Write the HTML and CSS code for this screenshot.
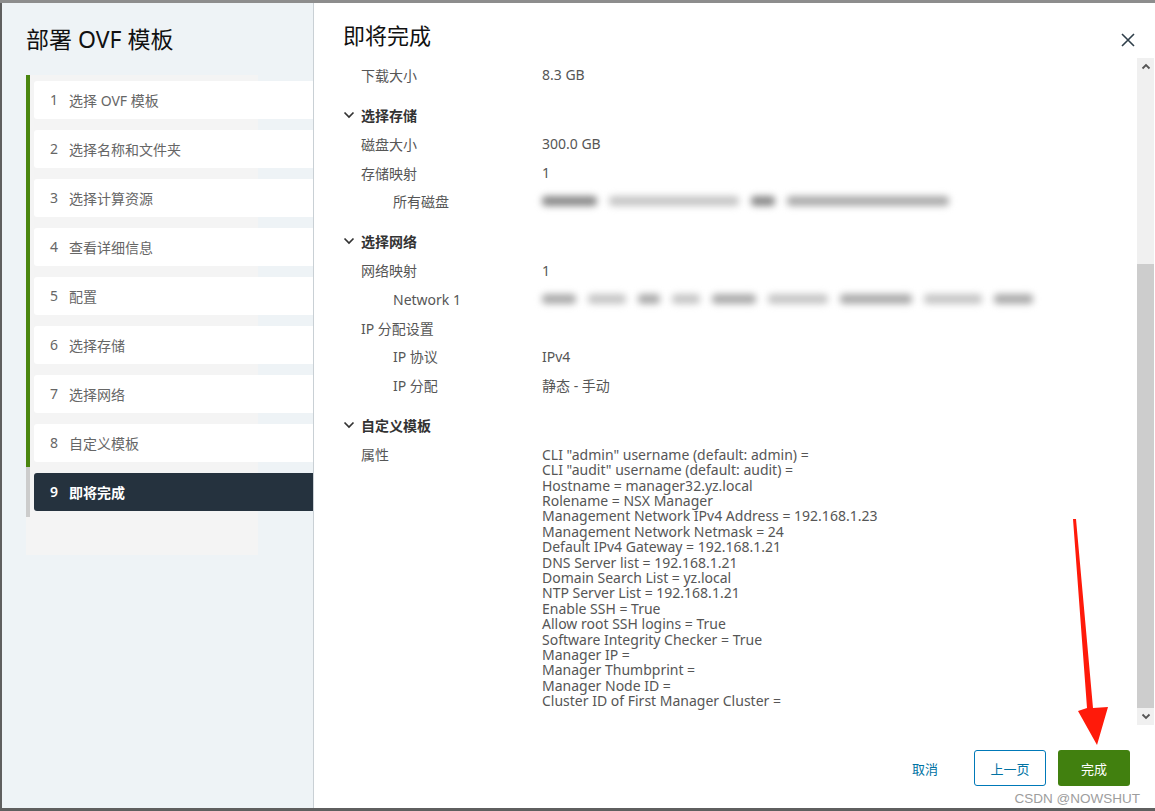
FILE: index.html
```html
<!DOCTYPE html>
<html lang="zh-CN">
<head>
<meta charset="utf-8">
<title>部署 OVF 模板</title>
<link rel="stylesheet" href="styles.css">
</head>
<body>
<div class="topstrip"></div>
<div class="dialog">
  <aside class="side">
    <h1 class="side-title">部署 OVF 模板</h1>
    <nav class="steps-wrap">
      <ol class="steps">
        <li class="step done"><div class="step-box"><span class="num">1</span>选择 OVF 模板</div></li>
        <li class="step done"><div class="step-box"><span class="num">2</span>选择名称和文件夹</div></li>
        <li class="step done"><div class="step-box"><span class="num">3</span>选择计算资源</div></li>
        <li class="step done"><div class="step-box"><span class="num">4</span>查看详细信息</div></li>
        <li class="step done"><div class="step-box"><span class="num">5</span>配置</div></li>
        <li class="step done"><div class="step-box"><span class="num">6</span>选择存储</div></li>
        <li class="step done"><div class="step-box"><span class="num">7</span>选择网络</div></li>
        <li class="step done"><div class="step-box"><span class="num">8</span>自定义模板</div></li>
        <li class="step current"><div class="step-box"><span class="num">9</span>即将完成</div></li>
      </ol>
    </nav>
  </aside>
  <main class="main">
    <header class="main-head">
      <h2 class="main-title">即将完成</h2>
      <button class="close" aria-label="关闭">
        <svg width="14" height="14" viewBox="0 0 14 14"><path d="M1 1 L13 13 M13 1 L1 13" stroke="#2f3f4a" stroke-width="1.6" fill="none"/></svg>
      </button>
    </header>
    <div class="scroll-area">
      <div class="content">
        <div class="row"><span class="lbl">下载大小</span><span class="val">8.3 GB</span></div>

        <div class="row sec"><svg class="chev" width="12" height="8" viewBox="0 0 12 8"><path d="M1.5 1.5 L6 6 L10.5 1.5" stroke="#333" stroke-width="1.7" fill="none"/></svg><span class="sec-title">选择存储</span></div>
        <div class="row"><span class="lbl">磁盘大小</span><span class="val">300.0 GB</span></div>
        <div class="row"><span class="lbl">存储映射</span><span class="val">1</span></div>
        <div class="row"><span class="lbl sub">所有磁盘</span><span class="val blurred">
          <i class="bl d" style="width:55px"></i><i class="bl l" style="width:130px"></i><i class="bl d" style="width:24px"></i><i class="bl m" style="width:162px"></i>
        </span></div>

        <div class="row sec"><svg class="chev" width="12" height="8" viewBox="0 0 12 8"><path d="M1.5 1.5 L6 6 L10.5 1.5" stroke="#333" stroke-width="1.7" fill="none"/></svg><span class="sec-title">选择网络</span></div>
        <div class="row"><span class="lbl">网络映射</span><span class="val">1</span></div>
        <div class="row"><span class="lbl sub lat">Network 1</span><span class="val blurred">
          <i class="bl m" style="width:34px"></i><i class="bl l" style="width:38px"></i><i class="bl m" style="width:22px"></i><i class="bl l" style="width:28px"></i><i class="bl m" style="width:44px"></i><i class="bl l" style="width:60px"></i><i class="bl m" style="width:72px"></i><i class="bl l" style="width:58px"></i><i class="bl m" style="width:39px"></i>
        </span></div>
        <div class="row"><span class="lbl">IP 分配设置</span><span class="val"></span></div>
        <div class="row"><span class="lbl sub">IP 协议</span><span class="val">IPv4</span></div>
        <div class="row"><span class="lbl sub">IP 分配</span><span class="val">静态 - 手动</span></div>

        <div class="row sec"><svg class="chev" width="12" height="8" viewBox="0 0 12 8"><path d="M1.5 1.5 L6 6 L10.5 1.5" stroke="#333" stroke-width="1.7" fill="none"/></svg><span class="sec-title">自定义模板</span></div>
        <div class="row props"><span class="lbl">属性</span><div class="val plist">
          <div>CLI "admin" username (default: admin) =</div>
          <div>CLI "audit" username (default: audit) =</div>
          <div>Hostname = manager32.yz.local</div>
          <div>Rolename = NSX Manager</div>
          <div>Management Network IPv4 Address = 192.168.1.23</div>
          <div>Management Network Netmask = 24</div>
          <div>Default IPv4 Gateway = 192.168.1.21</div>
          <div>DNS Server list = 192.168.1.21</div>
          <div>Domain Search List = yz.local</div>
          <div>NTP Server List = 192.168.1.21</div>
          <div>Enable SSH = True</div>
          <div>Allow root SSH logins = True</div>
          <div>Software Integrity Checker = True</div>
          <div>Manager IP =</div>
          <div>Manager Thumbprint =</div>
          <div>Manager Node ID =</div>
          <div>Cluster ID of First Manager Cluster =</div>
        </div></div>
      </div>
      <div class="scrollbar">
        <div class="sb-btn"><svg width="10" height="7" viewBox="0 0 10 7"><path d="M1.5 5.5 L5 2 L8.5 5.5" stroke="#555" stroke-width="1.8" fill="none"/></svg></div>
        <div class="sb-track"><div class="sb-thumb"></div></div>
        <div class="sb-btn"><svg width="10" height="7" viewBox="0 0 10 7"><path d="M1.5 1.5 L5 5 L8.5 1.5" stroke="#555" stroke-width="1.8" fill="none"/></svg></div>
      </div>
    </div>
    <footer class="foot">
      <button class="btn flat">取消</button>
      <button class="btn outline">上一页</button>
      <button class="btn primary">完成</button>
    </footer>
    <div class="watermark">CSDN @NOWSHUT</div>
  </main>
</div>
<svg class="annot" width="1155" height="811" viewBox="0 0 1155 811">
  <polygon points="1073,519 1076,519 1093,708 1108,707 1097,745 1078,711 1087,708" fill="#ff1a0a"/>
</svg>
</body>
</html>
```

FILE: styles.css
```css
* { box-sizing: border-box; }
html, body { margin: 0; padding: 0; }
body {
  width: 1155px;
  height: 811px;
  overflow: hidden;
  background: #5f5f5f;
  font-family: "Noto Sans", "Noto Sans CJK SC", sans-serif;
  position: relative;
}
.topstrip { height: 3px; background: #8d8d8d; }
.dialog {
  display: flex;
  margin-left: 2px;
  width: 1153px;
  height: 805px;
  background: #fff;
}
.side {
  width: 312px;
  background: #eef3f6;
  border-right: 1px solid #c9d0d5;
  padding: 20px 0 0 24px;
}
.side-title {
  margin: 0;
  font-size: 23px;
  font-weight: 400;
  line-height: 32px;
  color: #111;
}
.steps-wrap {
  margin-top: 20px;
  width: 232px;
  background: #f4f4f4;
  padding-bottom: 38px;
}
.steps { list-style: none; margin: 0; padding: 0; }
.step {
  width: 287px;
  height: 49px;
  border-left: 4px solid #4a860f;
  padding: 6px 0 0 4px;
}
.step.current { height: 50px; border-left-color: #cccccc; }
.step-box {
  height: 38px;
  background: #fff;
  border-radius: 3px 0 0 3px;
  display: flex;
  align-items: center;
  padding-left: 16px;
  padding-bottom: 1px;
  font-size: 14px;
  color: #666;
}
.num { width: 19px; }
.current .step-box { background: #25323e; color: #fff; font-weight: 600; }

.main {
  flex: 1;
  display: flex;
  flex-direction: column;
  position: relative;
  min-width: 0;
}
.main-head {
  height: 55px;
  padding: 18px 0 0 29px;
  position: relative;
}
.main-title {
  margin: 0;
  font-size: 22px;
  font-weight: 400;
  line-height: 28px;
  color: #111;
}
.close {
  position: absolute;
  right: 20px;
  top: 30px;
  width: 14px;
  height: 14px;
  padding: 0;
  border: 0;
  background: none;
  display: flex;
}
.scroll-area {
  height: 667px;
  display: flex;
}
.content {
  flex: 1;
  padding: 2.65px 0 0 29px;
  font-size: 14px;
  color: #565656;
}
.row {
  display: flex;
  align-items: center;
  height: 28.7px;
}
.row.sec { margin-top: 11px; height: 29.3px; }
.chev { width: 12px; margin-right: 6px; }
.sec-title { font-weight: 700; color: #333; }
.lbl { width: 199px; padding-left: 18px; flex: none; }
.lbl.sub { padding-left: 50px; }
.val { white-space: nowrap; }
.blurred { display: flex; gap: 12px; align-items: center; }
.bl {
  display: block;
  height: 10px;
  border-radius: 4px;
  filter: blur(3.5px);
}
.bl.d { background: #8a8a8a; }
.bl.m { background: #ababab; }
.bl.l { background: #c6c6c6; }
.row.props {
  height: auto;
  align-items: flex-start;
  padding-top: 7px;
  line-height: 15.4px;
}
.plist div { white-space: nowrap; }

.scrollbar {
  width: 17px;
  margin-right: 1px;
  background: #f0f0f0;
  display: flex;
  flex-direction: column;
}
.sb-btn { height: 17px; display: flex; align-items: center; justify-content: center; }
.sb-track { flex: 1; padding-top: 189px; }
.sb-thumb { height: 444px; background: #cdcdcd; }

.foot {
  flex: 1;
  display: flex;
  justify-content: flex-end;
  align-items: flex-start;
  padding: 25px 25px 0 0;
}
.btn {
  font-family: "Noto Sans CJK SC", sans-serif;
  font-size: 13px;
  height: 36px;
  border-radius: 3px;
  cursor: pointer;
}
.btn.flat {
  border: 0;
  background: none;
  color: #0072a3;
  padding: 0;
  margin-right: 36px;
}
.btn.outline {
  width: 72px;
  border: 1px solid #0079b8;
  background: #fff;
  color: #0072a3;
  margin-right: 12px;
}
.btn.primary {
  width: 72px;
  border: 0;
  background: #41800f;
  color: #fff;
}
.watermark {
  position: absolute;
  right: 15px;
  bottom: 2px;
  font-family: "Liberation Sans", sans-serif;
  font-size: 13.5px;
  color: #9d9d9d;
}
.annot { position: absolute; left: 0; top: 0; pointer-events: none; }
```
